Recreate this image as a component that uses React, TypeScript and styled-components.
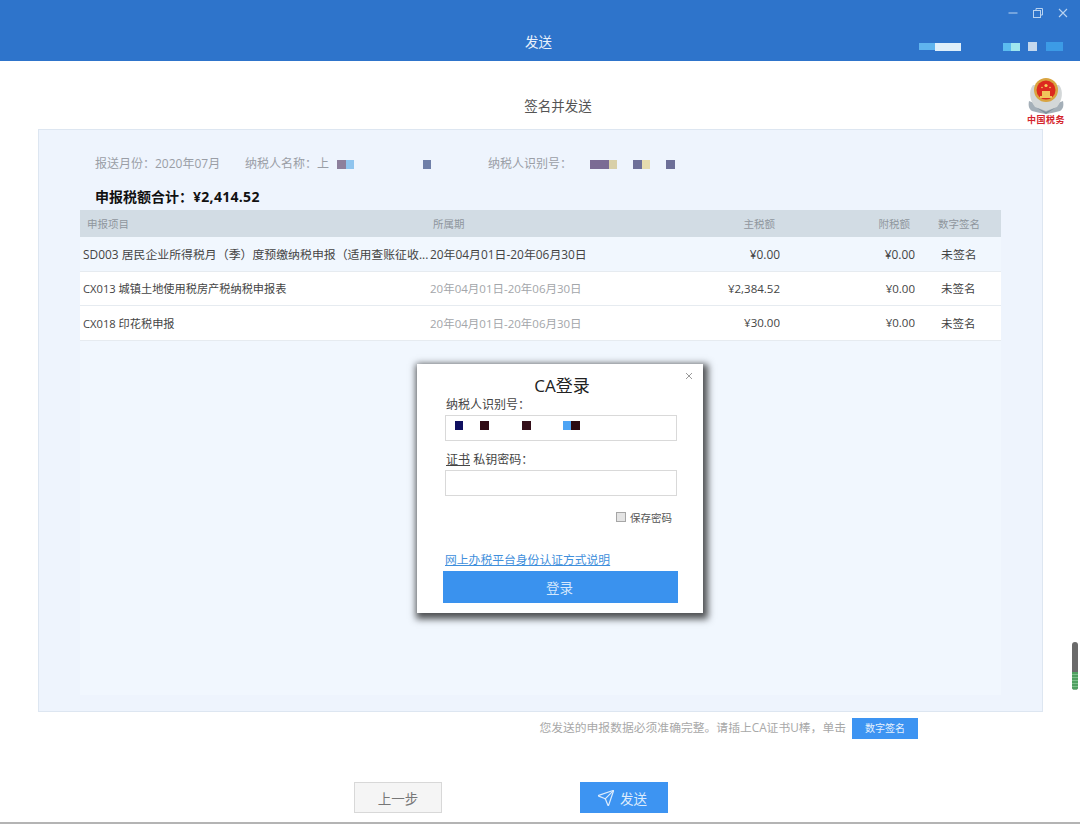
import React from "react";
import styled, { createGlobalStyle } from "styled-components";
import { Send } from "lucide-react";

const Global = createGlobalStyle`
  html, body { margin: 0; padding: 0; background: #fff; }
  body { font-family: "Open Sans", "Noto Sans CJK SC", sans-serif; text-spacing-trim: space-all; }
  * { box-sizing: border-box; }
`;

const Page = styled.div`
  position: relative;
  width: 1080px;
  height: 824px;
  overflow: hidden;
  display: flex;
  flex-direction: column;
  background: #fff;
  color: #444;
  border-bottom: 2px solid #b4b4b4;
`;

const Header = styled.header`
  height: 61px;
  flex: none;
  background: #2e74cb;
  display: flex;
  flex-direction: column;
`;

const WindowControls = styled.div`
  height: 25px;
  padding-right: 12px;
  display: flex;
  justify-content: flex-end;
  align-items: center;
  gap: 15px;
  color: #b9d3f0;
`;

const HeaderRow = styled.div`
  display: grid;
  grid-template-columns: 1fr auto 1fr;
  align-items: center;
  height: 34px;
`;

const HeaderTitle = styled.div`
  color: #e9f1fb;
  font-size: 13.5px;
  margin: -2px 3px 0 0;
`;

const Account = styled.div`
  display: flex;
  align-items: center;
  justify-self: end;
  padding-right: 17px;
  margin-top: 9px;
`;

const Mosaic = styled.span<{ $c: string; $w: number; $h?: number; $ml?: number }>`
  display: inline-block;
  flex: none;
  width: ${(p) => p.$w}px;
  height: ${(p) => p.$h ?? 9}px;
  margin-left: ${(p) => p.$ml ?? 0}px;
  background: ${(p) => p.$c};
  filter: blur(0.4px);
`;

const SubRow = styled.div`
  height: 68px;
  flex: none;
  display: grid;
  grid-template-columns: 1fr auto 1fr;
  align-items: center;
`;

const SubTitle = styled.h1`
  margin: 20px 0 0 36px;
  font-size: 13.5px;
  font-weight: 400;
  color: #555;
`;

const Emblem = styled.div`
  justify-self: end;
  margin: 11px 14px 0 0;
  width: 40px;
  display: flex;
  flex-direction: column;
  align-items: center;
`;

const EmblemText = styled.span`
  color: #d4232b;
  font-family: "Noto Sans CJK SC", serif;
  font-size: 9px;
  font-weight: 700;
  line-height: 10px;
  letter-spacing: 0.5px;
  white-space: nowrap;
`;

const Panel = styled.section`
  margin: 0 37px 0 38px;
  height: 583px;
  flex: none;
  padding: 0 41px 16px;
  background: #eef4fd;
  border: 1px solid #dde6f1;
  display: flex;
  flex-direction: column;
`;

const InfoRow = styled.div`
  height: 67px;
  padding: 27px 0 0 15px;
  display: flex;
  align-items: flex-start;
  font-size: 12px;
  line-height: 14px;
  color: #9a9ea6;
`;

const InfoItem = styled.span<{ $w: number }>`
  width: ${(p) => p.$w}px;
  flex: none;
  display: flex;
  align-items: center;
  white-space: nowrap;
`;

const Total = styled.div`
  height: 12px;
  padding-left: 15px;
  margin-top: -7px;
  margin-bottom: 8px;
  font-size: 14px;
  line-height: 14px;
  font-weight: 700;
  color: #111;
  white-space: nowrap;
`;

const Amount = styled.span`
  letter-spacing: 0.3px;
`;

const TableArea = styled.div`
  flex: 1;
  background: #f1f7fe;
`;

const Columns = styled.div`
  display: grid;
  grid-template-columns: 350px 200px 150px 135px 86px;
  align-items: center;
`;

const HeadRow = styled(Columns)`
  height: 27px;
  background: #d2dce4;
  font-size: 10.5px;
  color: #8f969d;
`;

const BodyRow = styled(Columns)<{ $tinted?: boolean }>`
  height: 34.5px;
  background: ${(p) => (p.$tinted ? "#f1f7fe" : "#fff")};
  border-bottom: 1px solid #e6ebf0;
  font-size: ${(p) => (p.$tinted ? "11.9px" : "11.5px")};
  color: #444;
`;

const Cell = styled.div<{ $right?: boolean; $pl?: number; $pr?: number; $muted?: boolean }>`
  text-align: ${(p) => (p.$right ? "right" : "left")};
  padding-left: ${(p) => p.$pl ?? 0}px;
  padding-right: ${(p) => p.$pr ?? 0}px;
  color: ${(p) => (p.$muted ? "#a3a6aa" : "inherit")};
  white-space: nowrap;
  overflow: hidden;
`;

const NameCell = styled(Cell)<{ $small?: boolean }>`
  padding-left: 3px;
  font-size: ${(p) => (p.$small ? "11.2px" : "inherit")};
`;

const Note = styled.div`
  height: 70px;
  flex: none;
  padding: 6px 162px 0 0;
  display: flex;
  justify-content: flex-end;
  align-items: flex-start;
  gap: 6px;
  font-size: 11.8px;
  line-height: 19px;
  color: #a8a8a8;
`;

const SignButton = styled.button`
  width: 66px;
  height: 21px;
  border: 0;
  padding: 0;
  background: #3d94f2;
  color: #e6f1fd;
  font: inherit;
  font-size: 10px;
`;

const Actions = styled.div`
  padding-left: 354px;
  display: flex;
  gap: 138px;
`;

const BackButton = styled.button`
  width: 88px;
  height: 31px;
  padding: 0;
  border: 1px solid #d8d8d8;
  background: #f5f5f5;
  color: #777;
  font: inherit;
  font-size: 13.5px;
`;

const SendButton = styled.button`
  width: 88px;
  height: 31px;
  padding: 0 4px 0 0;
  border: 0;
  background: #3d94f2;
  color: #dcebfc;
  font: inherit;
  font-size: 13.5px;
  display: flex;
  align-items: center;
  justify-content: center;
  gap: 5px;
`;

const Dialog = styled.div`
  position: absolute;
  left: 417px;
  top: 364px;
  width: 286px;
  height: 249px;
  background: #fff;
  box-shadow: 2px 3px 7px 3px rgba(0, 0, 0, 0.68);
  padding: 11px 26px 0 28px;
  display: flex;
  flex-direction: column;
`;

const CloseIcon = styled.span`
  position: absolute;
  top: 8px;
  right: 10px;
  line-height: 0;
  color: #9a9a9a;
`;

const DialogTitle = styled.h2`
  margin: 0;
  text-align: center;
  font-size: 17px;
  line-height: 22px;
  font-weight: 400;
  color: #222;
  padding-left: 2px;
`;

const FieldLabel = styled.label`
  display: block;
  margin: -1px 0 1px 1px;
  font-size: 12px;
  line-height: 18px;
  color: #444;
`;

const Underlined = styled.span`
  text-decoration: underline;
`;

const InputBox = styled.div`
  height: 26px;
  width: 232px;
  margin: 0 0 11px;
  border: 1px solid #d9d9d9;
  background: #fff;
  display: flex;
  align-items: center;
  padding: 0 0 5px 9px;
`;

const SaveRow = styled.div`
  display: flex;
  justify-content: flex-end;
  align-items: center;
  gap: 4px;
  height: 14px;
  margin-top: 3px;
  padding-right: 5px;
  font-size: 10.5px;
  color: #555;
`;

const CheckBox = styled.span`
  width: 10px;
  height: 10px;
  background: #e4e4e4;
  border: 1px solid #a6a6a6;
`;

const HelpLink = styled.a`
  margin: 27px 0 0 0;
  font-size: 11.8px;
  line-height: 17px;
  color: #3f8fdc;
  text-decoration: underline;
`;

const LoginButton = styled.button`
  width: 235px;
  height: 32px;
  margin: 3px 0 0 -2px;
  padding: 0 2px 0 0;
  border: 0;
  background: #3a92ee;
  color: #d5e8fc;
  font: inherit;
  font-size: 13.5px;
`;

const ScrollBar = styled.div`
  position: absolute;
  right: 2px;
  top: 642px;
  width: 6px;
  height: 48px;
  border-radius: 3px;
  overflow: hidden;
  background: #6a6a6a;
`;

const ScrollGrip = styled.div`
  margin-top: 30px;
  height: 18px;
  background: repeating-linear-gradient(#4fa060 0 2px, #7cc08a 2px 3px);
`;

const rows = [
  { name: "SD003 居民企业所得税月（季）度预缴纳税申报（适用查账征收...", main: "¥0.00", tinted: true },
  { name: "CX013 城镇土地使用税房产税纳税申报表", main: "¥2,384.52" },
  { name: "CX018 印花税申报", main: "¥30.00" },
];

const EmblemArt = () => (
  <svg width="38" height="38" viewBox="0 0 38 38">
    <path d="M2 24 C1 29 2 32 5 34 L13 36 L19 37 L25 36 L33 34 C36 32 37 29 36 24 L19 31Z" fill="#a4afb8" />
    <path d="M6 8 C1 14 3 24 8 30 L19 34 L30 30 C35 24 37 14 32 8Z" fill="#d3d7d8" />
    <path d="M10 31 L19 35 L28 31 L19 37Z" fill="#7f8e9a" />
    <circle cx="19" cy="13" r="12" fill="#d9a441" />
    <circle cx="19" cy="13" r="9.5" fill="#dc2a1f" />
    <path d="M13 19 h12 v2 h-12z M15 14 h8 v5 h-8z" fill="#f1c65a" />
    <circle cx="19" cy="8.5" r="1.6" fill="#f6d35d" />
    <circle cx="15" cy="10.5" r="0.8" fill="#f6d35d" />
    <circle cx="23" cy="10.5" r="0.8" fill="#f6d35d" />
  </svg>
);

export default function App() {
  return (
    <Page>
      <Global />
      <Header>
        <WindowControls>
          <svg width="10" height="10" viewBox="0 0 10 10">
            <path d="M0.5 5h9" stroke="currentColor" strokeWidth="1" />
          </svg>
          <svg width="10" height="10" viewBox="0 0 10 10" fill="none" stroke="currentColor">
            <rect x="0.5" y="2.5" width="7" height="7" />
            <path d="M3 2.5V0.5h6.5V7H7.5" />
          </svg>
          <svg width="10" height="10" viewBox="0 0 10 10">
            <path d="M1 1l8 8M9 1l-8 8" stroke="currentColor" strokeWidth="1.1" />
          </svg>
        </WindowControls>
        <HeaderRow>
          <span />
          <HeaderTitle>发送</HeaderTitle>
          <Account>
            <Mosaic $c="#5fb4ee" $w={16} $h={7} />
            <Mosaic $c="#dfeffa" $w={26} $h={8} />
            <Mosaic $c="#5bbcf0" $w={8} $h={8} $ml={42} />
            <Mosaic $c="#9ee6ee" $w={9} $h={8} />
            <Mosaic $c="#c4d8ee" $w={9} $h={9} $ml={8} />
            <Mosaic $c="#3c9be6" $w={17} $h={9} $ml={9} />
          </Account>
        </HeaderRow>
      </Header>

      <SubRow>
        <span />
        <SubTitle>签名并发送</SubTitle>
        <Emblem>
          <EmblemArt />
          <EmblemText>中国税务</EmblemText>
        </Emblem>
      </SubRow>

      <Panel>
        <InfoRow>
          <InfoItem $w={150}>报送月份：2020年07月</InfoItem>
          <InfoItem $w={243}>
            纳税人名称：上
            <Mosaic $c="#8d7f9c" $w={9} $ml={8} />
            <Mosaic $c="#8fc4ee" $w={8} />
            <Mosaic $c="#6f7fa8" $w={8} $ml={69} />
          </InfoItem>
          <InfoItem $w={230}>
            纳税人识别号：
            <Mosaic $c="#7b6b94" $w={19} $ml={18} />
            <Mosaic $c="#d8cfa8" $w={8} />
            <Mosaic $c="#6d6f98" $w={9} $ml={16} />
            <Mosaic $c="#e6dcae" $w={8} />
            <Mosaic $c="#6d6f98" $w={9} $ml={16} />
          </InfoItem>
        </InfoRow>
        <Total>
          申报税额合计：<Amount>¥2,414.52</Amount>
        </Total>
        <TableArea>
          <HeadRow>
            <Cell $pl={7}>申报项目</Cell>
            <Cell $pl={3}>所属期</Cell>
            <Cell $right $pr={5}>主税额</Cell>
            <Cell $right $pr={5}>附税额</Cell>
            <Cell $pl={23}>数字签名</Cell>
          </HeadRow>
          {rows.map((r) => (
            <BodyRow key={r.name} $tinted={r.tinted}>
              <NameCell $small={!r.tinted}>{r.name}</NameCell>
              <Cell $muted={!r.tinted}>20年04月01日-20年06月30日</Cell>
              <Cell $right>{r.main}</Cell>
              <Cell $right>¥0.00</Cell>
              <Cell $pl={26}>未签名</Cell>
            </BodyRow>
          ))}
        </TableArea>
      </Panel>

      <Note>
        您发送的申报数据必须准确完整。请插上CA证书U棒，单击
        <SignButton>数字签名</SignButton>
      </Note>

      <Actions>
        <BackButton>上一步</BackButton>
        <SendButton>
          <Send size={18} strokeWidth={1.6} />
          发送
        </SendButton>
      </Actions>

      <Dialog>
        <CloseIcon>
          <svg width="8" height="8" viewBox="0 0 8 8">
            <path d="M1 1l6 6M7 1L1 7" stroke="currentColor" strokeWidth="1" />
          </svg>
        </CloseIcon>
        <DialogTitle>CA登录</DialogTitle>
        <FieldLabel>纳税人识别号：</FieldLabel>
        <InputBox>
          <Mosaic $c="#101060" $w={8} />
          <Mosaic $c="#300a14" $w={9} $ml={17} />
          <Mosaic $c="#34101a" $w={9} $ml={33} />
          <Mosaic $c="#4ea4f4" $w={8} $ml={32} />
          <Mosaic $c="#2a0a12" $w={9} />
        </InputBox>
        <FieldLabel>
          <Underlined>证书</Underlined> 私钥密码：
        </FieldLabel>
        <InputBox />
        <SaveRow>
          <CheckBox />
          保存密码
        </SaveRow>
        <HelpLink href="#">网上办税平台身份认证方式说明</HelpLink>
        <LoginButton>登录</LoginButton>
      </Dialog>

      <ScrollBar>
        <ScrollGrip />
      </ScrollBar>
    </Page>
  );
}
